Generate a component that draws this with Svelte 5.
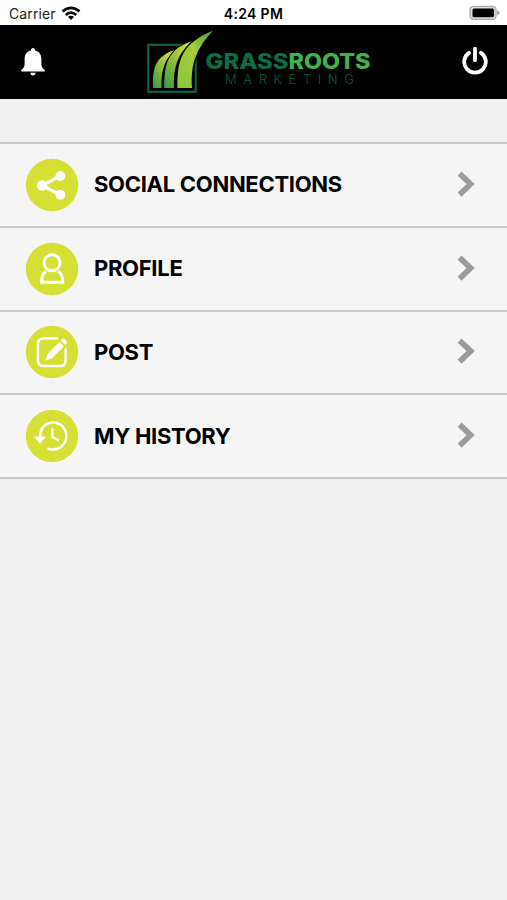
<script>
	const items = [
		{ label: 'SOCIAL CONNECTIONS', icon: 'share' },
		{ label: 'PROFILE', icon: 'profile' },
		{ label: 'POST', icon: 'post' },
		{ label: 'MY HISTORY', icon: 'history' },
	];
</script>

<div class='screen'>
	<div class='status'>
		<div class='carrier'>
			<span>Carrier</span>
			<svg width='20' height='15' viewBox='0 0 20 15' fill='none' stroke='#000' stroke-width='2.7'>
				<path d='M1.5 5.4Q10 -1.8 18.5 5.4M4.7 9Q10 4.4 15.3 9' />
				<path d='M7 10.8Q10 8.6 13 10.8L10 14Z' fill='#000' stroke='none' />
			</svg>
		</div>
		<span class='time'>4:24 PM</span>
		<svg class='battery' width='32' height='16' viewBox='0 0 32 16'>
			<rect x='1' y='1.3' width='26' height='13' rx='3.5' fill='#ddd' stroke='#aaa' stroke-width='1.3' />
			<rect x='3.5' y='3.5' width='21.5' height='8.8' rx='1.5' />
			<path d='M28 5.3Q31 6.3 31 7.8T28 10.3Z' fill='#aaa' />
		</svg>
	</div>

	<header>
		<svg width='26' height='30' viewBox='0 0 26 30' fill='#fff'>
			<path d='M13 1C11.5 1 10.8 2 10.9 3.6C6.4 4.5 4.7 8 4.6 12V17C4.5 20 3.5 21.3 1.3 23V24.5H24.7V23C22.5 21.3 21.5 20 21.4 17V12C21.3 8 19.6 4.5 15.1 3.6C15.2 2 14.5 1 13 1ZM10.2 25.7Q10.8 28.6 13 28.6T15.8 25.7Z' />
		</svg>
		<!-- Logo -->
		<svg class='logo' width='226' height='66' viewBox='146 29 226 66'>
			<defs>
				<linearGradient id='blade' x1='0' y1='1' x2='.8' y2='0'>
					<stop offset='0' stop-color='#369b46' />
					<stop offset='.65' stop-color='#a5c932' />
					<stop offset='1' stop-color='#d3df2d' />
				</linearGradient>
				<linearGradient id='tall' x1='0' y1='1' x2='.8' y2='0'>
					<stop offset='0' stop-color='#8ac53c' />
					<stop offset='.65' stop-color='#a9cd35' />
					<stop offset='1' stop-color='#55a53f' />
				</linearGradient>
			</defs>
			<rect x='148.3' y='44.8' width='47.4' height='47' fill='none' stroke='#0a6b42' stroke-width='2' />
			<path d='M153 88C152.5 66 156 56 176 49.5C165 58 161 69 161.5 88Z' fill='url(#blade)' stroke='#000' stroke-width='1.8' paint-order='stroke' />
			<path d='M164.3 88C163.8 65 168 48 193 41C180 51 173 64 174 88Z' fill='url(#blade)' stroke='#000' stroke-width='2' paint-order='stroke' />
			<path d='M177.5 88C177 60 182 43 213 30.8C198 47 190 62 192 88Z' fill='url(#tall)' stroke='#000' stroke-width='3' paint-order='stroke' />
			<text x='205.5' y='69' class='name' textLength='83' lengthAdjust='spacingAndGlyphs' fill='#0b6d43'>GRASS</text>
			<text x='288.5' y='69' class='name' textLength='82' lengthAdjust='spacingAndGlyphs' fill='#40b34a'>ROOTS</text>
			<text x='225' y='83.5' class='sub' textLength='133'>MARKETING</text>
		</svg>
		<svg width='28' height='30' viewBox='0 0 28 30' fill='none' stroke='#fff' stroke-width='3.8' stroke-linecap='round'>
			<path d='M8 5.8A10.8 10.8 0 1 0 20 5.8M14 1.8V13.2' />
		</svg>
	</header>

	<nav>
		{#each items as item}
			<div class='row'>
				<svg width='54' height='54' viewBox='0 0 54 54' fill='none' stroke='#fff' stroke-width='2.5'>
					<circle cx='27' cy='27' r='26.2' fill='#d5df34' stroke='none' />
					{#if item.icon === 'share'}
						<path d='M35.3 18L17 27.5L35.3 36.8' stroke-width='3.4' />
						<g fill='#fff' stroke='none'>
							<circle cx='35.4' cy='18' r='4.9' />
							<circle cx='17' cy='27.5' r='5.2' />
							<circle cx='35.4' cy='36.8' r='4.9' />
						</g>
					{:else if item.icon === 'profile'}
						<circle cx='27' cy='20.7' r='8' stroke-width='3' />
						<path d='M21 29.4C18 31 16.6 34.5 16.6 40.3H37.8C37.8 34.5 36.2 31 33 29.4' stroke-width='2.9' />
					{:else if item.icon === 'post'}
						<path d='M33 13.4H18.6Q12.9 13.4 12.9 19.1V35.1Q12.9 41 18.6 41H35Q40.6 41 40.6 35.4V23' stroke-width='2.4' />
						<path d='M20.3 35.8L22.8 28.4L34.4 16.8L39 21.3L27.4 33ZM35.6 15.6L37.2 14Q38.4 13 39.8 14.3L41.4 15.9Q42.5 17.1 41.6 18.5L40.1 20.1Z' fill='#fff' stroke='none' />
					{:else}
						<path d='M15.2 28C15 19 20.5 13.4 28 13.4C35.6 13.4 41.3 19.3 41.3 27C41.3 34.9 35 40.7 27.3 40.4L22.4 39.7' />
						<path d='M27.4 19.2V28L34 31.5' stroke-width='2.2' />
						<path d='M8.7 27.4H21.2L15 34.8Z' fill='#fff' stroke='none' />
					{/if}
				</svg>
				<span class='label'>{item.label}</span>
				<svg class='chevron' width='20' height='28' viewBox='0 0 20 28' fill='none' stroke='#9b9b9b' stroke-width='5.6'>
					<path d='M2.6 2.6L13.7 13.1L2.6 23.6' />
				</svg>
			</div>
		{/each}
	</nav>
</div>

<style>
:global(body) {
	margin: 0;
	background: #f0f0f0;
}

.screen {
	height: 900px;
	overflow: hidden;
	background: #f0f0f0;
	font-family: Inter, sans-serif;
	color: #000;
}

.status {
	display: grid;
	grid-template-columns: 1fr auto 1fr;
	align-items: center;
	box-sizing: border-box;
	height: 25px;
	padding: 1px 6px 0;
	background: #fff;
	font-size: 14px;
}

.carrier {
	display: flex;
	align-items: center;
	gap: 5px;
	padding-left: 3px;
	color: #222;
}

.carrier span {
	letter-spacing: .1px;
}

.time {
	font-weight: 600;
	letter-spacing: .35px;
}

.battery {
	justify-self: end;
}

header {
	display: flex;
	align-items: center;
	justify-content: space-between;
	box-sizing: border-box;
	height: 74px;
	padding: 0 18px 0 20px;
	background: #000;
}

.logo {
	margin-left: 11px;
}

.name {
	font: 800 21px Inter, sans-serif;
}

.sub {
	font: 300 13px Inter, sans-serif;
	letter-spacing: 4px;
	fill: #0b5c3a;
}

nav {
	margin-top: 43px;
	border-top: 2px solid #c8c8c8;
}

.row {
	display: flex;
	align-items: center;
	box-sizing: border-box;
	height: 83.75px;
	padding: 0 30px 0 25px;
	border-bottom: 2px solid #c8c8c8;
	background: #f5f5f5;
}

.label {
	margin: -1px 0 0 15px;
	font-size: 22px;
	font-weight: 650;
	letter-spacing: -.3px;
}

.chevron {
	margin-left: auto;
}
</style>
